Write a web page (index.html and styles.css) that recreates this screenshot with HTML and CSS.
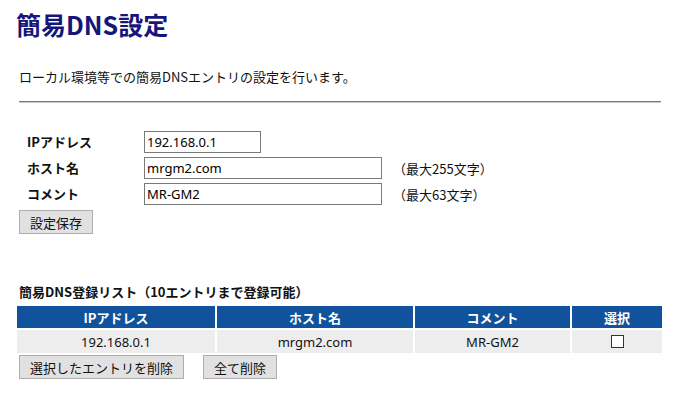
FILE: index.html
```html
<!DOCTYPE html>
<html lang="ja">
<head>
<meta charset="utf-8">
<title>簡易DNS設定</title>
<link rel="stylesheet" href="styles.css">
</head>
<body>
<h1 class="title">簡易DNS設定</h1>
<p class="desc">ローカル環境等での簡易DNSエントリの設定を行います。</p>
<hr class="rule">
<form class="form">
  <div class="grid">
    <label class="lbl">IPアドレス</label>
    <div class="field"><input class="txt txt-ip" type="text" value="192.168.0.1"></div>
    <label class="lbl">ホスト名</label>
    <div class="field"><input class="txt txt-long" type="text" value="mrgm2.com"><span class="note">（最大255文字）</span></div>
    <label class="lbl">コメント</label>
    <div class="field"><input class="txt txt-long" type="text" value="MR-GM2"><span class="note">（最大63文字）</span></div>
  </div>
  <button class="btn" type="button">設定保存</button>
</form>
<h2 class="sub">簡易DNS登録リスト（10エントリまで登録可能）</h2>
<table class="list">
  <colgroup><col class="c1"><col class="c2"><col class="c3"><col class="c4"></colgroup>
  <thead>
    <tr><th>IPアドレス</th><th>ホスト名</th><th>コメント</th><th>選択</th></tr>
  </thead>
  <tbody>
    <tr><td>192.168.0.1</td><td>mrgm2.com</td><td>MR-GM2</td><td><input class="chk" type="checkbox"></td></tr>
  </tbody>
</table>
<div class="actions">
  <button class="btn" type="button">選択したエントリを削除</button>
  <button class="btn" type="button">全て削除</button>
</div>
</body>
</html>
```
FILE: styles.css
```css
html, body { background: #fff; }
body {
  margin: 0;
  padding: 0 20px 0 19px;
  font-family: "Noto Sans", "Noto Sans CJK JP", sans-serif;
  font-size: 13px;
  color: #111;
}
.title {
  margin: 8px 0 0 -3px;
  font-size: 25px;
  line-height: 32px;
  font-weight: bold;
  color: #16167a;
  font-family: "Noto Sans CJK JP", sans-serif;
}
.desc {
  margin: 28px 0 0 0;
  line-height: 18px;
  font-family: "Noto Sans CJK JP", sans-serif;
}
.rule {
  margin: 15px 0 0 0;
  border: 0;
  height: 0;
  border-top: 1px solid #7d7d7d;
  border-bottom: 1px solid #c8c8c8;
}
.form { margin: 28px 0 0 0; }
.grid {
  display: grid;
  grid-template-columns: 117px auto;
  row-gap: 4px;
  margin-left: 8px;
  align-items: center;
}
.lbl {
  font-weight: bold;
  font-family: "Noto Sans CJK JP", sans-serif;
  line-height: 22px;
}
.field { display: flex; align-items: center; }
.txt {
  box-sizing: border-box;
  height: 22px;
  margin: 0;
  padding: 0 2px;
  border: 1px solid #7a7a7a;
  font-family: "Noto Sans", "Noto Sans CJK JP", sans-serif;
  font-size: 13px;
  color: #000;
  background: #fff;
}
.txt-ip { width: 117px; }
.txt-long { width: 238px; }
.note {
  margin-left: 11px;
  font-family: "Noto Sans CJK JP", sans-serif;
}
.btn {
  box-sizing: border-box;
  height: 24px;
  margin: 0;
  padding: 0 10px;
  border: 1px solid #adadad;
  background: #e1e1e1;
  font-family: "Noto Sans CJK JP", sans-serif;
  font-size: 13px;
  color: #111;
}
.form .btn { margin-top: 5px; }
.sub {
  margin: 50px 0 0 0;
  font-size: 13px;
  line-height: 16px;
  font-weight: bold;
  font-family: "Noto Sans CJK JP", sans-serif;
}
.list {
  margin: 4px 0 0 -4px;
  width: calc(100% + 7px);
  border-collapse: separate;
  border-spacing: 2px;
  table-layout: fixed;
}
.c1 { width: 198px; }
.c2 { width: 196px; }
.c3 { width: 155px; }
.c4 { width: 90px; }
.list th {
  height: 22px;
  padding: 0;
  background: #10529b;
  color: #fff;
  font-weight: bold;
  font-family: "Noto Sans CJK JP", sans-serif;
  text-align: center;
}
.list td {
  height: 23px;
  padding: 0;
  background: #ededed;
  text-align: center;
}
.chk {
  appearance: none;
  -webkit-appearance: none;
  display: block;
  width: 13px;
  height: 13px;
  margin: 0 auto;
  border: 1px solid #333;
  background: #fff;
}
.actions {
  display: flex;
  gap: 19px;
  margin-top: 0;
}
```
